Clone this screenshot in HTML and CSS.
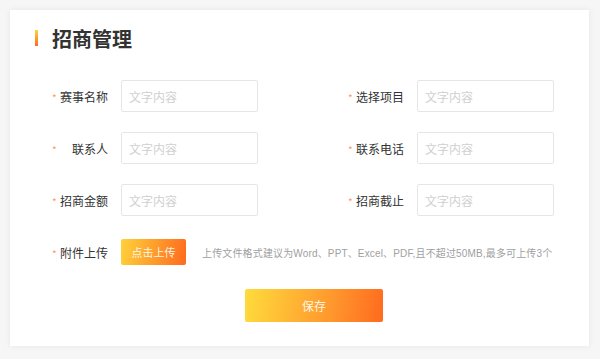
FILE: index.html
```html
<!DOCTYPE html>
<html>
<head>
  <meta charset="utf-8">
  <title>招商管理</title>
  <link rel="stylesheet" href="styles.css">
</head>
<body>
  <div class="card">
    <h2 class="card-title"><span class="title-bar"></span>招商管理</h2>
    <form class="form">
      <div class="form-grid">
        <div class="field">
          <label class="field-label"><span class="req">*</span>赛事名称</label>
          <input class="field-input" type="text" placeholder="文字内容">
        </div>
        <div class="field">
          <label class="field-label"><span class="req">*</span>选择项目</label>
          <input class="field-input" type="text" placeholder="文字内容">
        </div>
        <div class="field">
          <label class="field-label"><span class="req">*</span>联系人</label>
          <input class="field-input" type="text" placeholder="文字内容">
        </div>
        <div class="field">
          <label class="field-label"><span class="req">*</span>联系电话</label>
          <input class="field-input" type="text" placeholder="文字内容">
        </div>
        <div class="field">
          <label class="field-label"><span class="req">*</span>招商金额</label>
          <input class="field-input" type="text" placeholder="文字内容">
        </div>
        <div class="field">
          <label class="field-label"><span class="req">*</span>招商截止</label>
          <input class="field-input" type="text" placeholder="文字内容">
        </div>
      </div>
      <div class="upload-row">
        <label class="field-label"><span class="req">*</span>附件上传</label>
        <button type="button" class="upload-button">点击上传</button>
        <span class="upload-hint">上传文件格式建议为Word、PPT、Excel、PDF,且不超过50MB,最多可上传3个</span>
      </div>
      <div class="actions">
        <button type="button" class="save-button">保存</button>
      </div>
    </form>
  </div>
</body>
</html>
```

FILE: styles.css
```css
/* Page */
body {
  margin: 0;
  background-color: #f6f6f6;
  font-family: "Noto Sans CJK SC", "Noto Sans", sans-serif;
  color: #333;
}

/* Card */
.card {
  margin: 10px;
  width: 579px;
  height: 336px;
  box-sizing: border-box;
  padding: 14px 25px 0;
  background-color: #fff;
  box-shadow: 0 0 6px rgba(0, 0, 0, 0.07);
}

.card-title {
  display: flex;
  align-items: center;
  margin: 0;
  height: 28px;
  font-size: 20px;
  font-weight: bold;
  color: #333;
}

.title-bar {
  width: 3px;
  height: 16px;
  margin-right: 14px;
  background: linear-gradient(#ffd43b, #ff6a1e);
}

/* Form */
.form {
  margin-top: 28px;
  padding-left: 17px;
}

.form-grid {
  display: grid;
  grid-template-columns: 296px 206px;
  row-gap: 20px;
}

.field {
  display: flex;
  align-items: center;
}

.field-label {
  display: flex;
  justify-content: space-between;
  align-items: center;
  width: 56px;
  margin-right: 13px;
  font-size: 12px;
  color: #333;
}

.req {
  color: #ff9a66;
  font-size: 10px;
  margin-top: 2px;
}

.field-input {
  width: 137px;
  height: 32px;
  box-sizing: border-box;
  padding: 0 7px;
  border: 1px solid #e6e6e6;
  border-radius: 2px;
  font-family: inherit;
  font-size: 12px;
  color: #333;
  outline: none;
}

.field-input::placeholder {
  color: #d0d0d0;
}

/* Upload */
.upload-row {
  display: flex;
  align-items: center;
  margin-top: 23px;
}

.upload-button {
  width: 65px;
  height: 26px;
  border: none;
  border-radius: 2px;
  background: linear-gradient(100deg, #ffd23a, #ff6a1e);
  color: rgba(255, 255, 255, 0.9);
  font-family: inherit;
  font-size: 11px;
  padding: 0;
  cursor: pointer;
}

.upload-hint {
  margin-left: 16px;
  font-family: "Liberation Sans", "Noto Sans CJK SC", sans-serif;
  font-size: 10px;
  letter-spacing: 0.15px;
  color: #a0a0a0;
  white-space: nowrap;
}

/* Save */
.actions {
  margin-top: 24px;
  padding-left: 193px;
}

.save-button {
  width: 138px;
  height: 33px;
  border: none;
  border-radius: 2px;
  background: linear-gradient(100deg, #ffdc3c, #ff9a2e 60%, #ff6a1e);
  color: rgba(255, 255, 255, 0.9);
  font-family: inherit;
  font-size: 12px;
  padding: 0;
  cursor: pointer;
}
```
